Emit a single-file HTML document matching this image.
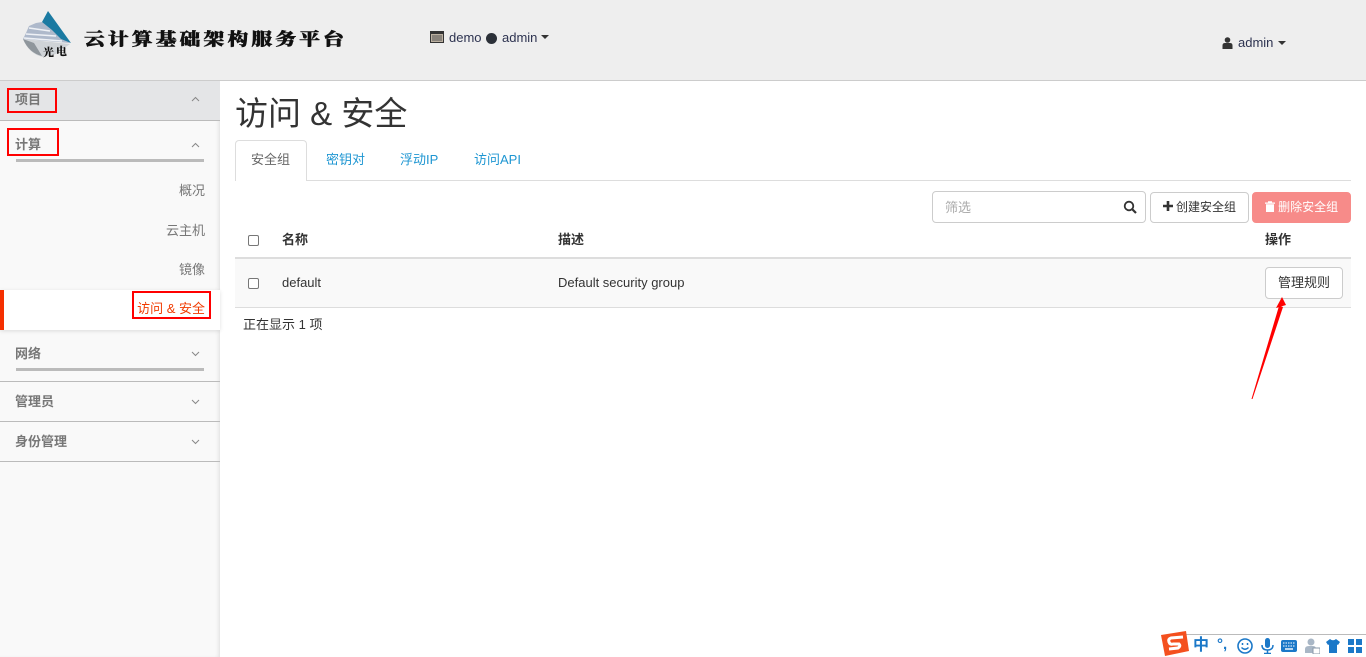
<!DOCTYPE html>
<html><head><meta charset="utf-8"><style>
html,body{margin:0;padding:0;width:1366px;height:657px;overflow:hidden;background:#fff}
body{font-family:"Liberation Sans","Noto Sans CJK SC",sans-serif;font-size:13px;color:#333;position:relative}
.a{position:absolute;white-space:nowrap}
.s{color:#777;font-weight:bold;font-size:13px;line-height:18px}
.i{color:#777;font-size:13px;line-height:18px;right:1161px}
.red{position:absolute;border:2px solid #f00;box-sizing:border-box}
.line{position:absolute;background:#bbb}
.tab{position:absolute;top:152px;line-height:16px;font-size:13px;color:#1e96d2}
.btn{position:absolute;box-sizing:border-box;border:1px solid #ccc;border-radius:4px;background:#fff;text-align:center}
</style></head><body>
<!-- header -->
<div class="a" style="left:0;top:0;width:1366px;height:80px;background:#eee"></div>
<div class="a" style="left:0;top:80px;width:1366px;height:1px;background:#ccc"></div>
<svg class="a" style="left:20px;top:8px" width="56" height="52" viewBox="0 0 56 52">
<path d="M3 31Q9 46 23 49L36 46 50 36Z" fill="#cfd3d7"/>
<path d="M3 31L14 35 22 48Q9 45 3 31Z" fill="#8f969c"/>
<path d="M22 14L50 35 3 31 6 25 9 18 16 15Z" fill="#aeb9cb"/>
<path d="M9 20L30 23M6 26L36 28M4 30L42 33" stroke="#eef1f6" stroke-width="1.500" fill="none"/>
<path d="M28 3L51 35 41 31 32 22 22 14Z" fill="#1a7aa2"/>
<text x="23" y="48" font-family="'Noto Serif CJK SC',serif" font-size="11" font-weight="900" fill="#111">光</text>
<text x="36" y="47" font-family="'Noto Serif CJK SC',serif" font-size="11" font-weight="900" fill="#111">电</text>
</svg>
<div class="a" style="left:84px;top:26px;font-family:'Noto Serif CJK SC',serif;font-weight:900;font-size:17px;line-height:24px;letter-spacing:2.6px;color:#111;transform:scaleX(1.22);transform-origin:0 0;-webkit-text-stroke:.5px #111">云计算基础架构服务平台</div>
<svg class="a" style="left:430px;top:31px" width="14" height="12" viewBox="0 0 14 12"><rect x=".5" y=".5" width="13" height="11" fill="#bbb0a0" stroke="#333"/><rect x="1" y="1" width="12" height="2" fill="#333"/><path d="M2 5h10M2 7h10M2 9h10" stroke="#555"/></svg>
<div class="a" style="left:449px;top:29px;line-height:18px;font-size:13px;color:#2d3350">demo</div>
<div class="a" style="left:486px;top:33px;width:11px;height:11px;border-radius:50%;background:#2b3038"></div>
<div class="a" style="left:502px;top:29px;line-height:18px;font-size:13px;color:#2d3350">admin</div>
<div class="a" style="left:541px;top:35px;border:4.5px solid transparent;border-top-color:#333;border-bottom:0"></div>
<svg class="a" style="left:1222px;top:37px" width="11" height="12" viewBox="0 0 11 12"><circle cx="5.500" cy="3" r="2.800" fill="#333"/><path d="M.5 12V8.500Q.5 6 3 6h5q2.500 0 2.500 2.500V12Z" fill="#333"/></svg>
<div class="a" style="left:1238px;top:34px;line-height:18px;font-size:13px;color:#2d3350">admin</div>
<div class="a" style="left:1278px;top:41px;border:4px solid transparent;border-top-color:#333;border-bottom:0"></div>

<!-- sidebar -->
<div class="a" style="left:0;top:81px;width:220px;height:576px;background:#f9f9f9;box-shadow:inset -3px 0 4px -2px #ddd"></div>
<div class="a" style="left:0;top:81px;width:220px;height:39px;background:#e4e5e7"></div>
<div class="line" style="left:0;top:120px;width:220px;height:1px"></div>
<div class="a s" style="left:15px;top:91px">项目</div>
<div class="red" style="left:7px;top:88px;width:50px;height:25px"></div>
<div class="a s" style="left:15px;top:136px">计算</div>
<div class="red" style="left:7px;top:128px;width:52px;height:28px"></div>
<div class="line" style="left:16px;top:159px;width:188px;height:3px"></div>
<svg class="a" style="left:191px;top:96px" width="9" height="6"><path d="M1 5L4.500 1.500 8 5" fill="none" stroke="#888"/></svg>
<svg class="a" style="left:191px;top:142px" width="9" height="6"><path d="M1 5L4.500 1.500 8 5" fill="none" stroke="#888"/></svg>
<div class="a i" style="top:182px">概况</div>
<div class="a i" style="top:222px">云主机</div>
<div class="a i" style="top:261px">镜像</div>
<div class="a" style="left:0;top:290px;width:220px;height:40px;background:#fff;box-shadow:0 1px 4px rgba(0,0,0,.12)"></div>
<div class="a" style="left:0;top:290px;width:4px;height:40px;background:#f52f00"></div>
<div class="a" style="right:1161px;top:300px;color:#f13a00;font-size:13px;line-height:18px">访问 &amp; 安全</div>
<div class="red" style="left:132px;top:291px;width:79px;height:28px"></div>
<div class="a s" style="left:15px;top:345px">网络</div>
<div class="line" style="left:16px;top:368px;width:188px;height:3px"></div>
<div class="line" style="left:0;top:381px;width:220px;height:1px"></div>
<div class="a s" style="left:15px;top:393px">管理员</div>
<div class="line" style="left:0;top:421px;width:220px;height:1px"></div>
<div class="a s" style="left:15px;top:433px">身份管理</div>
<div class="line" style="left:0;top:461px;width:220px;height:1px"></div>
<svg class="a" style="left:191px;top:351px" width="9" height="6"><path d="M1 1L4.500 4.500 8 1" fill="none" stroke="#888"/></svg>
<svg class="a" style="left:191px;top:399px" width="9" height="6"><path d="M1 1L4.500 4.500 8 1" fill="none" stroke="#888"/></svg>
<svg class="a" style="left:191px;top:439px" width="9" height="6"><path d="M1 1L4.500 4.500 8 1" fill="none" stroke="#888"/></svg>

<!-- content -->
<div class="a" style="left:235px;top:93px;font-size:33px;line-height:42px;color:#333">访问 &amp; 安全</div>
<div class="a" style="left:235px;top:180px;width:1116px;height:1px;background:#ddd"></div>
<div class="a" style="left:235px;top:140px;width:72px;height:41px;box-sizing:border-box;background:#fff;border:1px solid #ddd;border-bottom:0;border-radius:4px 4px 0 0"></div>
<div class="tab" style="left:251px;color:#666">安全组</div>
<div class="tab" style="left:326px">密钥对</div>
<div class="tab" style="left:400px">浮动IP</div>
<div class="tab" style="left:474px">访问API</div>

<div class="a" style="left:932px;top:191px;width:214px;height:32px;box-sizing:border-box;border:1px solid #ccc;border-radius:4px;background:#fff"></div>
<div class="a" style="left:945px;top:199px;color:#aaa;line-height:18px">筛选</div>
<svg class="a" style="left:1123px;top:200px" width="14" height="14" viewBox="0 0 14 14"><circle cx="6" cy="6" r="4.300" fill="none" stroke="#333" stroke-width="1.800"/><path d="M9 9L13 13" stroke="#333" stroke-width="2.200"/></svg>
<div class="btn" style="left:1150px;top:192px;width:99px;height:31px;font-size:12px;color:#333;line-height:28px;text-align:left;padding-left:25px">创建安全组</div>
<svg class="a" style="left:1163px;top:201px" width="10" height="10"><path d="M3.700 0h2.600v3.700H10v2.600H6.300V10H3.700V6.300H0V3.700h3.700Z" fill="#333"/></svg>
<div class="btn" style="left:1252px;top:192px;width:99px;height:31px;line-height:28px;font-size:12px;color:#fff;background:#f78b89;border-color:#f78b89">
<svg width="10" height="11" viewBox="0 0 10 11" style="vertical-align:-1px"><path d="M0 1.500h10v1.300H0zM3 .2h4v1.500H3zM1 3.300h8V11H1z" fill="#fff"/></svg> 删除安全组</div>

<svg class="a" style="left:248px;top:235px" width="11" height="11"><rect x=".5" y=".5" width="10" height="10" rx="1.500" fill="#fff" stroke="#777"/></svg>
<div class="a" style="left:282px;top:231px;font-weight:bold;line-height:18px">名称</div>
<div class="a" style="left:558px;top:231px;font-weight:bold;line-height:18px">描述</div>
<div class="a" style="left:1265px;top:231px;font-weight:bold;line-height:18px">操作</div>
<div class="a" style="left:235px;top:257px;width:1116px;height:2px;background:#ddd"></div>
<div class="a" style="left:235px;top:259px;width:1116px;height:48px;background:#f9f9f9"></div>
<div class="a" style="left:235px;top:307px;width:1116px;height:1px;background:#ddd"></div>
<svg class="a" style="left:248px;top:278px" width="11" height="11"><rect x=".5" y=".5" width="10" height="10" rx="1.500" fill="#fff" stroke="#777"/></svg>
<div class="a" style="left:282px;top:274px;font-size:13px;line-height:18px">default</div>
<div class="a" style="left:558px;top:274px;font-size:13px;line-height:18px">Default security group</div>
<div class="btn" style="left:1265px;top:267px;width:78px;height:32px;line-height:29px;font-size:13px;color:#333">管理规则</div>
<div class="a" style="left:243px;top:316px;line-height:18px;font-size:13px">正在显示 1 项</div>
<svg class="a" style="left:1245px;top:295px" width="45" height="106"><path d="M6.500 104L34 11 38 12 7.500 104Z" fill="#f00"/><path d="M37 2L31 13 41 10Z" fill="#f00"/></svg>

<!-- IME bar -->
<div class="a" style="left:1185px;top:634px;width:181px;height:23px;background:#fff;border-top:1px solid #bbb;box-sizing:border-box"></div>
<svg class="a" style="left:1160px;top:630px" width="30" height="27" viewBox="0 0 30 27"><path d="M1 5L26 1 29 21 5 26Z" fill="#f4501e"/><path d="M23 7L11 8Q8 9 9 12T13 14L19 14Q21 16 18 18L9 19" fill="none" stroke="#fff" stroke-width="3"/></svg>
<div class="a" style="left:1193px;top:637px;font-size:16px;line-height:18px;font-weight:bold;color:#1b78c8">中</div>
<div class="a" style="left:1217px;top:636px;font-size:15px;line-height:18px;font-weight:bold;color:#1b78c8">°,</div>
<svg class="a" style="left:1237px;top:638px" width="16" height="16"><circle cx="8" cy="8" r="7" fill="#fff" stroke="#1b78c8" stroke-width="1.600"/><path d="M5.500 5v2M10.500 5v2" stroke="#1b78c8" stroke-width="1.500"/><path d="M4.500 9.500Q8 13 11.500 9.500" stroke="#1b78c8" stroke-width="1.300" fill="none"/></svg>
<svg class="a" style="left:1261px;top:638px" width="13" height="16"><rect x="4" y="0" width="5" height="10" rx="2.500" fill="#1b78c8"/><path d="M1 7Q1 12 6.500 12T12 7M6.500 12v3M3 15.500h7" stroke="#1b78c8" stroke-width="1.500" fill="none"/></svg>
<svg class="a" style="left:1281px;top:640px" width="16" height="12"><rect width="16" height="12" rx="2" fill="#1b78c8"/><path d="M2 3h12M2 6h12" stroke="#fff" stroke-dasharray="1.500 1"/><path d="M4 9h8" stroke="#fff" stroke-width="1.400"/></svg>
<svg class="a" style="left:1304px;top:638px" width="16" height="16"><circle cx="7" cy="4" r="3.500" fill="#a9b7c6"/><path d="M1 15V11Q1 8 5 8h4q3 0 3 3v4Z" fill="#a9b7c6"/><rect x="9" y="10" width="7" height="6" fill="#fff" stroke="#8a9aaa"/></svg>
<svg class="a" style="left:1326px;top:639px" width="14" height="14"><path d="M4 0L0 3 2 6 3 5.500V14H11V5.500L12 6 14 3 10 0Q7 2.500 4 0Z" fill="#1b78c8"/></svg>
<svg class="a" style="left:1348px;top:639px" width="14" height="14"><path d="M0 0h6v6H0zM8 0h6v6H8zM0 8h6v6H0zM8 8h6v6H8z" fill="#1b78c8"/></svg>
</body></html>
